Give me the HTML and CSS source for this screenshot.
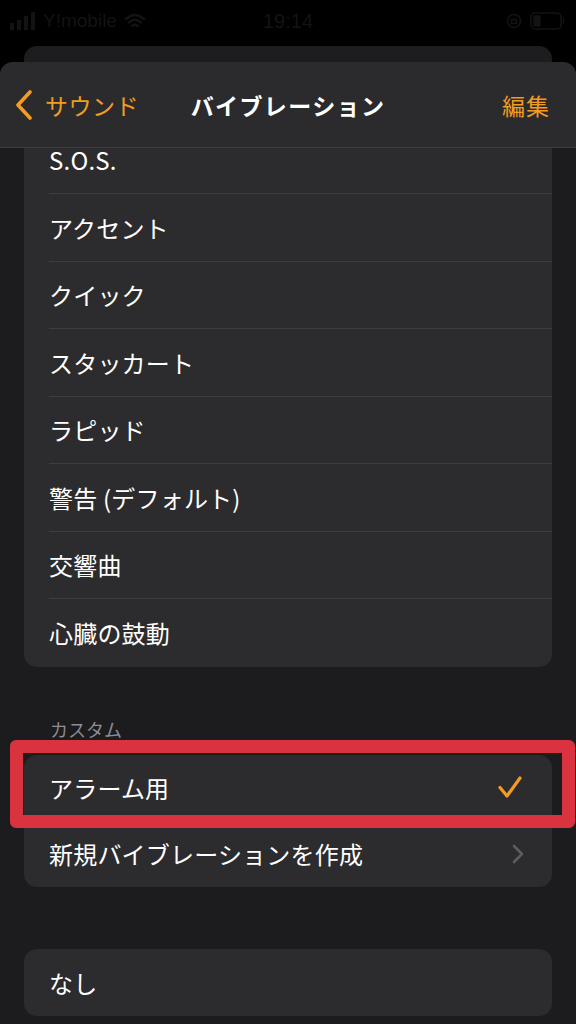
FILE: index.html
```html
<!DOCTYPE html>
<html lang="ja">
<head>
  <meta charset="UTF-8" />
  <meta name="viewport" content="width=device-width, initial-scale=1.0">
  <title>バイブレーション</title>
  <link rel="stylesheet" href="styles.css">
</head>
<body>
  <div class="status">
    <div class="status-left">
      <svg class="signal" width="26" height="20" viewBox="0 0 26 20">
        <rect x="0" y="12" width="4" height="7" />
        <rect x="7" y="9" width="4" height="10" />
        <rect x="14" y="5" width="4" height="14" />
        <rect x="21" y="1" width="4" height="18" />
      </svg>
      <span class="carrier">Y!mobile</span>
      <svg class="wifi" width="22" height="16" viewBox="0 0 22 16">
        <path d="M2 6 Q11 -2 20 6" />
        <path d="M5 9.5 Q11 4 17 9.5" />
        <path d="M8 13 Q11 10.5 14 13" />
      </svg>
    </div>
    <div class="status-time">19:14</div>
    <div class="status-right">
      <svg width="16" height="16" viewBox="0 0 16 16">
        <circle cx="8" cy="8" r="6.5" />
        <rect x="5.5" y="6.5" width="5" height="4" />
      </svg>
      <svg width="36" height="18" viewBox="0 0 36 18">
        <rect x="1" y="1" width="30" height="16" rx="4" />
        <rect x="4" y="4" width="6" height="10" rx="1" class="fill" />
        <path d="M33.5 6.5 V11.5" />
      </svg>
    </div>
  </div>

  <div class="stack-back"></div>

  <div class="sheet">
    <header class="nav">
      <a class="nav-back">
        <svg width="22" height="30" viewBox="0 0 22 30">
          <path d="M16 2 L4 15 L16 28" />
        </svg>
        <span>サウンド</span>
      </a>
      <h1 class="nav-title">バイブレーション</h1>
      <a class="nav-edit">編集</a>
    </header>

    <div class="scroll">
      <ul class="group standard">
        <li class="row"><span>S.O.S.</span></li>
        <li class="row"><span>アクセント</span></li>
        <li class="row"><span>クイック</span></li>
        <li class="row"><span>スタッカート</span></li>
        <li class="row"><span>ラピッド</span></li>
        <li class="row"><span>警告 (デフォルト)</span></li>
        <li class="row"><span>交響曲</span></li>
        <li class="row"><span>心臓の鼓動</span></li>
      </ul>

      <div class="section-title">カスタム</div>

      <ul class="group custom">
        <li class="row">
          <span>アラーム用</span>
          <svg class="check" width="26" height="24" viewBox="0 0 26 24">
            <path d="M3 12.5 L10 21 L23 3" />
          </svg>
        </li>
        <li class="row">
          <span>新規バイブレーションを作成</span>
          <svg class="chevron" width="14" height="20" viewBox="0 0 14 20">
            <path d="M3 2 L11 10 L3 18" />
          </svg>
        </li>
        <div class="highlight"></div>
      </ul>

      <ul class="group none">
        <li class="row"><span>なし</span></li>
      </ul>
    </div>
  </div>
</body>
</html>
```

FILE: styles.css
```css
* {
  box-sizing: border-box;
}

body {
  margin: 0;
  width: 576px;
  height: 1024px;
  overflow: hidden;
  background: #000;
  font-family: "Noto Sans CJK JP", "Noto Sans", sans-serif;
  color: #fff;
}

/* ステータスバー（暗く沈んでいる） */
.status {
  height: 46px;
  display: flex;
  align-items: center;
  justify-content: space-between;
  padding: 0 10px 4px 10px;
  color: #131313;
  position: relative;
}

.status-left {
  display: flex;
  align-items: center;
  gap: 7px;
}

.status-left svg rect {
  fill: #131313;
}

.carrier {
  font-family: "Liberation Sans", sans-serif;
  font-size: 19px;
}

.wifi path {
  fill: none;
  stroke: #131313;
  stroke-width: 2.5;
  stroke-linecap: round;
}

.status-time {
  position: absolute;
  left: 0;
  right: 0;
  text-align: center;
  font-family: "Liberation Sans", sans-serif;
  font-size: 20px;
  pointer-events: none;
}

.status-right {
  display: flex;
  align-items: center;
  gap: 8px;
}

.status-right svg * {
  fill: none;
  stroke: #131313;
  stroke-width: 1.5;
}

.status-right svg .fill {
  fill: #131313;
}

/* 後ろのシート */
.stack-back {
  height: 16px;
  margin: 0 24px;
  background: #1d1d1f;
  border-radius: 13px 13px 0 0;
}

.sheet {
  height: 962px;
  background: #1c1c1e;
  border-radius: 13px 13px 0 0;
  overflow: hidden;
  display: flex;
  flex-direction: column;
}

.nav {
  height: 86px;
  flex: none;
  display: grid;
  grid-template-columns: 1fr auto 1fr;
  align-items: center;
  background: #2b2b2d;
  border-bottom: 1px solid #3c3c3f;
  padding: 0 14px;
  color: #f39c1f;
  font-size: 23px;
}

.nav-back {
  display: flex;
  align-items: center;
  gap: 9px;
}

.nav-back svg path {
  fill: none;
  stroke: #f39c1f;
  stroke-width: 3.6;
  stroke-linecap: round;
  stroke-linejoin: round;
}

.nav-back span {
  letter-spacing: 0.5px;
}

.nav-title {
  margin: 0;
  font-size: 23px;
  font-weight: bold;
  color: #fff;
  letter-spacing: 1.4px;
}

.nav-edit {
  justify-self: end;
  margin-right: 12px;
  letter-spacing: 1px;
}

/* リスト */
.scroll {
  flex: 1;
  overflow: hidden;
}

.group {
  list-style: none;
  margin: 0 24px;
  padding: 0;
  background: #2c2c2e;
  border-radius: 13px;
  position: relative;
}

.standard {
  margin-top: -21.5px;
}

.row {
  height: 67.5px;
  margin-left: 25px;
  padding-right: 29px;
  display: flex;
  align-items: center;
  justify-content: space-between;
  border-bottom: 1px solid #3d3d40;
  font-size: 24px;
  letter-spacing: 0.2px;
}

.row:last-of-type {
  border-bottom: none;
}

.section-title {
  margin: 0 50px;
  padding: 50px 0 13px;
  line-height: 25px;
  font-size: 18px;
  color: #8d8d93;
}

.custom .row {
  height: 66px;
}

.check path {
  fill: none;
  stroke: #f39c1f;
  stroke-width: 3.2;
  stroke-linecap: round;
  stroke-linejoin: round;
}

.chevron {
  margin-right: -2px;
}

.chevron path {
  fill: none;
  stroke: #5b5b60;
  stroke-width: 2.6;
  stroke-linecap: round;
  stroke-linejoin: round;
}

/* 赤い枠の強調 */
.highlight {
  position: absolute;
  left: -14px;
  right: -23px;
  top: -15px;
  height: 88px;
  border: 13px solid #d93340;
  border-radius: 6px;
  pointer-events: none;
}

.none {
  margin-top: 62px;
}

.none .row {
  height: 67px;
}
```
